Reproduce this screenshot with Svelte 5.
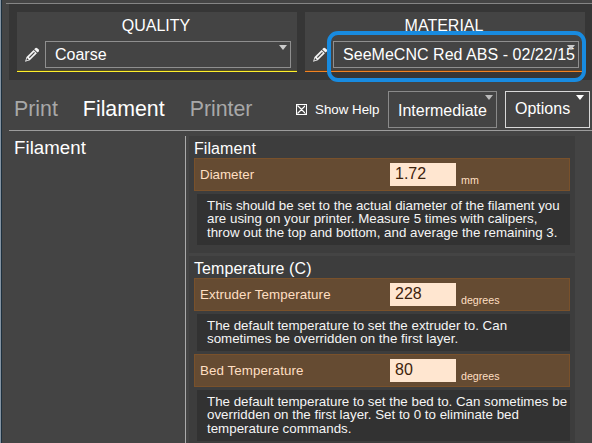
<script>
  const presets = [
    { title: 'QUALITY', value: 'Coarse', kind: 'quality' },
    { title: 'MATERIAL', value: 'SeeMeCNC Red ABS - 02/22/15', kind: 'material', highlighted: true }
  ];
  const tabs = ['Print', 'Filament', 'Printer'];
  const sections = [
    {
      title: 'Filament',
      settings: [
        {
          label: 'Diameter', value: '1.72', unit: 'mm',
          help: [
            'This should be set to the actual diameter of the filament you',
            'are using on your printer. Measure 5 times with calipers,',
            'throw out the top and bottom, and average the remaining 3.'
          ]
        }
      ]
    },
    {
      title: 'Temperature (C)',
      settings: [
        {
          label: 'Extruder Temperature', value: '228', unit: 'degrees',
          help: ['The default temperature to set the extruder to. Can', 'sometimes be overridden on the first layer.']
        },
        {
          label: 'Bed Temperature', value: '80', unit: 'degrees',
          help: [
            'The default temperature to set the bed to. Can sometimes be',
            'overridden on the first layer. Set to 0 to eliminate bed',
            'temperature commands.'
          ]
        }
      ]
    }
  ];
</script>

<main class="window">
  <header class="presets">
    {#each presets as p}
      <section class="preset" class:quality={p.kind === 'quality'} class:material={p.kind === 'material'}>
        <h2>{p.title}</h2>
        <div class="pick">
          <svg class="pencil" width="16" height="16" viewBox="0 0 16 16">
            <path d="M1 14.8 2.5 10 9.6 2.9 12.9 6.2 5.8 13.3Z" fill="#f4f4f4" />
            <path d="M10.2 2.2 11.5 1q.9-.6 1.8.2l1.4 1.4q.7.9.1 1.7L13.5 5.6Z" fill="#f4f4f4" />
            <path d="M5.3 10.6 10.5 5.4" stroke="#444" stroke-width="1.3" fill="none" />
            <path d="M2.3 13.6 3.1 11.1 4.8 12.8Z" fill="#444" />
          </svg>
          <div class="select">
            <span>{p.value}</span>
            <i class="arrow"></i>
            {#if p.highlighted}<div class="ring"></div>{/if}
          </div>
        </div>
      </section>
    {/each}
  </header>

  <nav>
    <div class="tabs">
      {#each tabs as t}
        <span class="tab" class:active={t === 'Filament'}>{t}</span>
      {/each}
    </div>
    <svg class="check" width="11" height="11" viewBox="0 0 11 11">
      <path d="M.5.5h10v10h-10ZM1.5 1.5l8 8M9.5 1.5l-8 8" fill="none" stroke="#fff" stroke-width="1.1" />
    </svg>
    <span class="show">Show Help</span>
    <div class="button level"><span>Intermediate</span><i class="arrow"></i></div>
    <div class="button options"><span>Options</span><i class="arrow"></i></div>
  </nav>

  <div class="body">
    <aside>Filament</aside>
    <div class="content">
      {#each sections as s}
        <section class="group">
          <h3>{s.title}</h3>
          {#each s.settings as item}
            <div class="setting">
              <span class="label" class:wide={item.label !== 'Diameter'}>{item.label}</span>
              <span class="field">{item.value}</span>
              <span class="unit">{item.unit}</span>
            </div>
            <p class="help" class:short={item.help.length === 2}>{item.help.join('\n')}</p>
          {/each}
        </section>
      {/each}
    </div>
  </div>
</main>

<style>
  :global(body) { margin: 0; overflow: hidden; background: #444; }
  * { box-sizing: border-box; }
  .window {
    width: 592px; height: 443px; overflow: hidden;
    display: flex; flex-direction: column;
    padding: 3px 0 0 6px;
    background: linear-gradient(90deg, #8494a3 0 1px, #1d303f 1px 2px, #444 2px);
    color: #fff; font-family: "Liberation Sans", Arial, sans-serif;
    font-size: 16px; line-height: 18px; white-space: nowrap;
  }
  h2, h3 { margin: 0; font-size: 16px; font-weight: 400; }
  .presets {
    flex: none; height: 77px; border-top: 1px solid #858585;
    display: flex; gap: 8px; padding: 8px 7px 8px 11px;
    background: linear-gradient(90deg, #444 0 3px, #363636 3px);
  }
  .preset { width: 280px; height: 60px; background: #444; padding-top: 5px; }
  .quality { border-bottom: 1px solid #fff02c; box-shadow: inset 0 -1px #57531f; }
  .material { border-bottom: 1px solid #f28322; box-shadow: inset 0 -1px #5c4026; }
  h2 { text-align: center; line-height: 18px; padding-right: 2px; }
  .pick { display: flex; margin-top: 6px; padding-left: 7px; }
  .pencil { margin: 6px 5px 0 0; flex: none; }
  .select { position: relative; width: 246px; height: 27px; border: 1px solid #8f8f8f; padding: 4px 0 0 9px; }
  .arrow {
    position: absolute; top: 3px; right: 3px; width: 8px; height: 5px;
    background: #ccc; clip-path: polygon(0 0, 100% 0, 50% 100%);
  }
  .material .select { letter-spacing: .03px; }
  .ring { position: absolute; left: -7px; top: -11px; width: 258.5px; height: 51px; border: 4px solid #188be0; border-radius: 11px; }
  nav { flex: none; display: flex; height: 51px; margin-left: 3px; border-bottom: 1px solid #9c9c9c; }
  .tabs { display: flex; width: 286px; padding: 17px 0 0 5px; gap: 25px; font-size: 21.333px; line-height: 24px; color: #a8a8a8; }
  .active { color: #fff; }
  .check { margin: 24px 8px 0 1px; flex: none; }
  .show { width: 73px; font-size: 13.333px; line-height: 16px; padding-top: 22px; }
  .button { position: relative; height: 37px; margin-top: 11px; border: 1px solid #8a8a8a; }
  .level { width: 109px; padding: 10px 0 0 9px; margin-right: 8px; }
  .options { width: 85px; padding: 8px 0 0 9px; border-color: #d8d8d8; }
  .options .arrow { background: #fff; right: 5px; }
  .level .arrow { background: #bbb; }
  .body { flex: 1; display: flex; padding-top: 5px; }
  aside { width: 180px; border-right: 1px solid #aaa; padding: 1px 0 0 8px; font-size: 18.667px; line-height: 21px; letter-spacing: .05px; }
  .content { width: 386px; margin-left: 3px; display: flex; flex-direction: column; gap: 3px; }
  .group { background: #3d3d3d; padding: 3px 5px 8px; flex: none; }
  h3 { line-height: 19px; letter-spacing: .07px; }
  .setting { height: 33px; display: flex; border: 1px solid #79512b; background: #654b32; color: #ffdfc2; }
  .label { width: 195px; padding: 8px 0 0 5px; font-size: 13.333px; line-height: 16px; }
  .wide { letter-spacing: .1px; }
  .field { width: 66px; height: 23px; margin-top: 4px; padding: 2px 0 0 5px; background: #ffe6d0; color: #3d230d; }
  .unit { padding: 15px 0 0 5px; font-size: 10.667px; line-height: 12px; }
  .help {
    margin: 3px 0 0 3px; height: 51px; padding: 5px 0 0 10px;
    background: #323232; color: #f5f5f5;
    font-size: 13.333px; line-height: 13.333px; white-space: pre;
  }
  .short { height: 37px; }
  .help + .setting { margin-top: 3px; }
</style>
